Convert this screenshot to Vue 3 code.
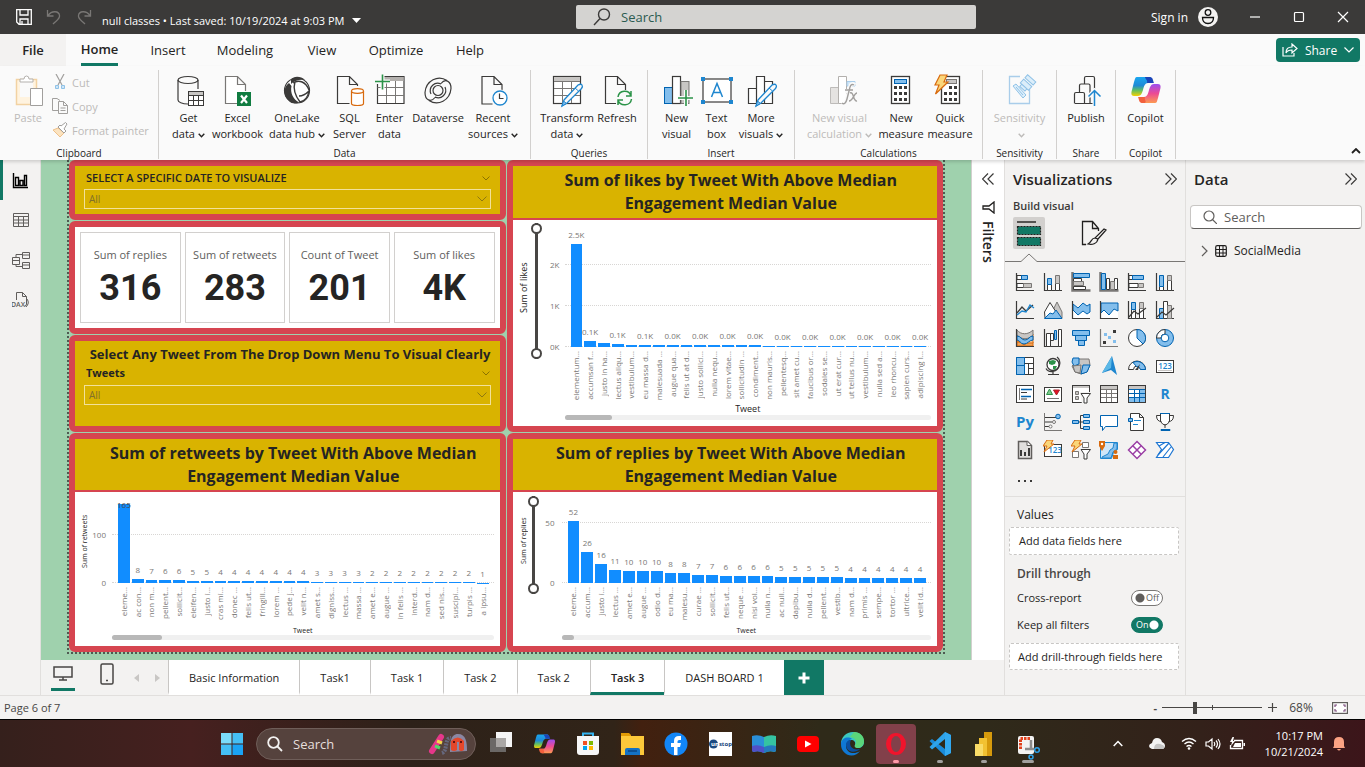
<script setup>
import { ref } from 'vue'

const menus = ['Insert', 'Modeling', 'View', 'Optimize', 'Help']

const ribbon = [
  {
    name: 'Data', cls: 'g-data', items: [
      { icon: 'getData', a: 'Get', b: 'data', drop: true },
      { icon: 'excel', a: 'Excel', b: 'workbook' },
      { icon: 'oneLake', a: 'OneLake', b: 'data hub', drop: true },
      { icon: 'sql', a: 'SQL', b: 'Server' },
      { icon: 'enter', a: 'Enter', b: 'data' },
      { icon: 'dataverse', a: 'Dataverse' },
      { icon: 'recent', a: 'Recent', b: 'sources', drop: true }
    ]
  },
  {
    name: 'Queries', cls: 'g-queries', items: [
      { icon: 'transform', a: 'Transform', b: 'data', drop: true },
      { icon: 'refresh', a: 'Refresh' }
    ]
  },
  {
    name: 'Insert', cls: 'g-insert', items: [
      { icon: 'newVisual', a: 'New', b: 'visual' },
      { icon: 'textBox', a: 'Text', b: 'box' },
      { icon: 'moreVisuals', a: 'More', b: 'visuals', drop: true }
    ]
  },
  {
    name: 'Calculations', cls: 'g-calc', items: [
      { icon: 'calc', a: 'New visual', b: 'calculation', drop: true, off: true },
      { icon: 'measure', a: 'New', b: 'measure' },
      { icon: 'quick', a: 'Quick', b: 'measure' }
    ]
  },
  { name: 'Sensitivity', cls: 'g-sens', items: [{ icon: 'sensitivity', a: 'Sensitivity', b: '', drop: true, off: true }] },
  { name: 'Share', cls: 'g-share', items: [{ icon: 'publish', a: 'Publish' }] },
  { name: 'Copilot', cls: 'g-copilot', items: [{ icon: 'copilot', a: 'Copilot' }] }
]

const pencil = '<path d="M13 25l14-15q3-1.500 4 0t-.5 3.500L16 28l-5 3z" fill="#fafafa" stroke="#1e86cf" stroke-width="1.300"/><path d="M12.500 26l3 2.500-4.500 2.500z" fill="#83beec" stroke="#1e86cf"/><path d="M24 13l3.500 3" stroke="#1e86cf"/>'
const page = '<path d="M15.500 29H5V1.500h12l8 8V17M17 1.500v8h8" fill="none" stroke="#3b3a39" stroke-width="1.200"/>'
const ribbonArt = {
  getData: '<path d="M5 5v20c0 2 4 4 10 4M25 5v9" fill="none" stroke="#3b3a39" stroke-width="1.200"/><ellipse cx="15" cy="5" rx="10" ry="3.500" fill="none" stroke="#3b3a39" stroke-width="1.200"/><rect x="15.500" y="16.500" width="15" height="14" fill="#fff" stroke="#3b3a39"/><path d="M16 17h14v3H16z" fill="#c8c6c4"/><path d="M15.500 20.500h15M15.500 25.500h15M20.500 20v10M25.500 20v10" stroke="#3b3a39"/>',
  excel: '<path d="M16 28.500H3.500v-27h12l8 8V16M15.500 1.500v8h8" fill="#fff" stroke="#797775" stroke-width="1.200"/><rect x="15" y="17" width="14" height="14" fill="#107c41"/><path d="M19 20.500l6 7.500M25 20.500l-6 7.500" stroke="#fff" stroke-width="2.200"/>',
  oneLake: '<circle cx="16" cy="15.500" r="12.500" fill="#fff" stroke="#3b3a39" stroke-width="1.200"/><path d="M10 4.500C13 .5 20 1 24 5c-6-1-11 1-14 4z" fill="#3b3a39"/><path d="M8 8c-6 4-6 13 0 18 3 3 7 3 10 1.500C12 24 9 18 10.500 11z" fill="#3b3a39"/><path d="M14 6.500c-2 7 0 14 5 20.500 4-1 8-5 9-11-3 3-6 5-10 5M12 8c6-4 13-1 16 7" fill="none" stroke="#3b3a39" stroke-width="1.400"/>',
  sql: '<path d="M15.500 28.500H3.500v-27h12l8 8V11M15.500 1.500v8h8" fill="none" stroke="#3b3a39" stroke-width="1.200"/><path d="M17.500 16v12.500c0 1 2.500 2 6 2s6-1 6-2V16" fill="#fff" stroke="#d86a0e" stroke-width="1.200"/><ellipse cx="23.500" cy="16" rx="6" ry="2.300" fill="#fff" stroke="#d86a0e" stroke-width="1.200"/>',
  enter: '<path d="M10 1.500h20v27H3.500V9" fill="#fff" stroke="#3b3a39" stroke-width="1.200"/><path d="M10 2h19.500v4H10z" fill="#b3b0ad"/><path d="M3.500 12.500H30M3.500 20.500H30M12.500 6v22M21.500 6v22" stroke="#797775"/><path d="M8.500-.500v15M1 6.500h15" stroke="#fafafa" stroke-width="4"/><path d="M8.500-.500v15M1 6.500h15" stroke="#2b9348" stroke-width="1.600"/>',
  dataverse: '<g fill="none" stroke="#3b3a39" stroke-width="1.200"><circle cx="16" cy="15.500" r="5"/><path d="M25 5.500c-9-6-21 0-22 12 0 8 6 10 10 5M7 25.500c9 6 21 0 22-12 0-8-6-10-10-5M9 19c-3-7 4-13 10-10M23 12c3 7-4 13-10 10"/></g>',
  recent: page + '<circle cx="23" cy="23" r="8.500" fill="#fafafa"/><circle cx="23" cy="23" r="7" fill="#fff" stroke="#1e86cf" stroke-width="1.300"/><path d="M22.500 18.500V23.500h4" fill="none" stroke="#3b3a39" stroke-width="1.200"/>',
  transform: '<rect x="2.500" y="1.500" width="27" height="27" fill="#fff" stroke="#3b3a39" stroke-width="1.200"/><path d="M3 2h26v4H3z" fill="#c8c6c4"/><path d="M3 6.500h26M3 13.500h26M3 20.500h26M11.500 6v22M20.500 6v22" stroke="#797775"/>' + pencil,
  refresh: '<path d="M15 28.500H4.500v-27h12l8 8V15M16.500 1.500v8h8" fill="none" stroke="#3b3a39" stroke-width="1.200"/><path d="M17 22c1-7 11-8 13-1M30 16v5h-5M30.500 24c-1 7-11 8-13.500 1M17 30v-5h5" fill="none" stroke="#2b9348" stroke-width="1.500"/>',
  newVisual: '<rect x="3.500" y="12.500" width="8" height="16" fill="#83beec" stroke="#0063b1"/><rect x="11.500" y="1.500" width="8" height="27" fill="#fff" stroke="#3b3a39" stroke-width="1.200"/><rect x="20" y="6.500" width="8" height="22" fill="#c8c6c4" stroke="#797775"/><path d="M25 15v16M17 23h15" stroke="#fafafa" stroke-width="4"/><path d="M25 15v16M17 23h15" stroke="#2b9348" stroke-width="1.600"/>',
  textBox: '<rect x="2" y="4" width="28" height="23" fill="#fff" stroke="#3b3a39" stroke-width="1.200"/><g fill="#1e86cf"><path d="M0 2h4v4H0zM28 2h4v4h-4zM0 25h4v4H0zM28 25h4v4h-4z"/></g><path d="M10.500 22L16 8.500 21.500 22M12.500 17.500h7" fill="none" stroke="#1e86cf" stroke-width="1.500"/>',
  moreVisuals: '<path d="M3.500 13.500h8v15h-8zM11.500 1.500h8v27h-8zM19.500 6.500h8v22h-8z" fill="#fff" stroke="#3b3a39" stroke-width="1.200"/>' + pencil,
  calc: '<path d="M6.500 12.500h8v16h-8z" fill="#e5e3e1" stroke="#bdbbb9"/><path d="M14.500 1.500h8v27h-8z" fill="#fff" stroke="#b3b0ad"/><path d="M23 6.500h8V11h-8z" fill="#cfe6f8" stroke="#a9cdea"/><path d="M31 10c-4-3-5 1-6 6l-2 8c-1 4-3 6-5 4M21 16h8" fill="none" stroke="#fafafa" stroke-width="4"/><path d="M30 10c-3-2-4 1-5 6l-2 8c-1 4-3 6-5 4M21 15h8M26 18c4-2 3 9 7 8M33 18c-3 0-4 8-8 8" fill="none" stroke="#a19f9d" stroke-width="1.400"/>',
  measure: '<rect x="6.500" y="1.500" width="18" height="27" fill="#fff" stroke="#3b3a39" stroke-width="1.300"/><rect x="9.500" y="4.500" width="12" height="4" fill="#83beec" stroke="#0063b1"/><path d="M9 11h3v3H9zM14 11h3v3h-3zM19 11h3v3h-3zM9 17h3v3H9zM14 17h3v3h-3zM19 17h3v3h-3zM9 23h3v3H9zM14 23h3v3h-3zM19 23h3v3h-3z" fill="#3b3a39"/>',
  quick: '<rect x="7.500" y="1.500" width="18" height="27" fill="#fff" stroke="#3b3a39" stroke-width="1.300"/><rect x="12.500" y="4.500" width="10" height="4" fill="#c8c6c4" stroke="#797775"/><path d="M10 17h3v3h-3zM15 11h3v3h-3zM20 11h3v3h-3zM15 17h3v3h-3zM20 17h3v3h-3zM10 23h3v3h-3zM15 23h3v3h-3zM20 23h3v3h-3z" fill="#3b3a39"/><path d="M6 0h7l-3 7h4L1.500 19 5 10H1z" fill="#fad67a" stroke="#d86a0e" stroke-width="1.200"/>',
  sensitivity: '<path d="M16 1.500H5.500v27h20V14" fill="none" stroke="#a9cdea" stroke-width="1.300"/><g transform="rotate(42 22 9)" fill="#dceefa" stroke="#90c2e7"><rect x="17" y="1" width="11" height="4"/><path d="M17 7h11v5H17zM19 12h7v3h-7z"/></g><path d="M9 11l3-2 10 11-3 3zM12 12l7 8" fill="#dceefa" stroke="#90c2e7"/>',
  publish: '<path d="M5 28.500h19M4.500 28.500V19q0-1.500 1.500-1.500h7q1.500 0 1.500 1.500v9.500M9.500 17v-6.500Q9.500 9 11 9h7.500q1.500 0 1.500 1.500v18M14.500 8.500V3q0-1.500 1.500-1.500h7q1.500 0 1.500 1.500v11" fill="none" stroke="#3b3a39" stroke-width="1.200"/><path d="M24.500 31V15.500M18.500 21.500l6-6 6 6" fill="none" stroke="#fafafa" stroke-width="4"/><path d="M24.500 31V15.500M18.500 21.500l6-6 6 6" fill="none" stroke="#1e86cf" stroke-width="1.500"/>'
}
const copilotArt = '<path d="M7 2h12c3 0 3 3 4 6h-5c-3 0-4 3-5 7-1 3-2 6-5 6H4c-3 0-3-3-2-6l2-8c1-3 1-5 3-5z" fill="url(#cpA)"/><path d="M17 2h3c3 0 3 4 4 6h-7c1-3-2-4-2-6z" fill="#1b44b8"/><path d="M25 28H13c-3 0-3-3-4-6h5c3 0 4-3 5-7 1-3 2-6 5-6h4c3 0 3 3 2 6l-2 8c-1 3-1 5-3 5z" fill="url(#cpB)"/><path d="M15 28h-3c-3 0-3-4-4-6h7c-1 3 2 4 0 6z" fill="#f2603d"/>'
ribbonArt.copilot = copilotArt

const ax = '<path d="M1.500 1v17.500H19" fill="none" stroke="#3b3a39" stroke-width="1.200"/>'
const B = 'fill="#83beec" stroke="#0063b1"'
const G = 'fill="#c8c6c4" stroke="#797775"'
const W = 'fill="#fff" stroke="#3b3a39"'
const bolt = '<path d="M4 0h6L8 4h3L1 12l3-6H0z" fill="#fad67a" stroke="#d86a0e"/>'
const funnel = '<path d="M10 9.500h9.500L16 14v5h-3v-5z" fill="#fff" stroke="#3b3a39"/>'
const visuals = [
  ['Stacked bar chart', ax + `<path d="M2 3.500h5v4H2zM2 11.500h7v4H2z" ${W}/><path d="M6.500 3.500h6v4h-6z" ${B}/><path d="M8.500 11.500h8v4h-8z" ${G}/>`],
  ['Stacked column chart', ax + `<path d="M4.500 12.500h4v6h-4zM12.500 11.500h4v7h-4z" ${W}/><path d="M4.500 6.500h4v6h-4z" ${B}/><path d="M12.500 3.500h4v8h-4z" ${G}/>`],
  ['Clustered bar chart', `<path d="M1.500 0v18.500H19.500" fill="none" stroke="#797775" stroke-width="2.500"/><path d="M2.500 1.500h16v4h-16z" ${B}/><path d="M2.500 6.500h8v3h-8zM2.500 14.500h12v3h-12z" ${W}/><path d="M2.500 9.500h10v4h-10z" ${G}/>`],
  ['Clustered column chart', `<path d="M1.500 0v18.500H19.500" fill="none" stroke="#797775" stroke-width="2.500"/><path d="M2.500 1.500h4v16h-4z" ${B}/><path d="M7.500 6.500h3v11h-3zM15.500 6.500h3v11h-3z" ${W}/><path d="M11.500 9.500h4v8h-4z" ${G}/>`],
  ['100% stacked bar chart', ax + `<path d="M2 3.500h4v4H2zM2 11.500h9v4H2z" ${W}/><path d="M5.500 3.500h11v4h-11z" ${B}/><path d="M11.500 11.500h5v4h-5z" ${G}/>`],
  ['100% stacked column chart', ax + `<path d="M4.500 14.500h4v4h-4zM12.500 8.500h4v10h-4z" ${W}/><path d="M4.500 3.500h4v11h-4z" ${B}/><path d="M12.500 3.500h4v5h-4z" ${G}/>`],
  ['Line chart', ax + '<path d="M2 13l5-6 4 4 7-6" fill="none" stroke="#3b3a39" stroke-width="1.300"/><path d="M2 15l5-4 4 1 4-7 4 3" fill="none" stroke="#1e86cf" stroke-width="1.300"/>'],
  ['Area chart', `<path d="M8 14l6-12 5 10v6H8z" ${G}/><path d="M1.500 12L7 2.500 13 12l-5 6H2z" ${W}/><path d="M1.500 18.500L7 13l3 1 3-4 6 8.500z" ${B}/>`],
  ['Stacked area chart', `<path d="M2 9l4 3 4-4 4 3 5-4v11H2z" fill="#fff"/><path d="M2 4l5 4 5-5 4 3 3-2v8l-3 2-4-3-5 4-5-5z" ${B}/>` + ax],
  ['100% stacked area chart', `<path d="M2 3h17v15H2z" fill="#fff"/><path d="M2 3h17v8l-4-2-5 6-5-5-3 3z" ${B}/>` + ax],
  ['Line and stacked column chart', ax + `<path d="M4.500 9.500h4v9h-4zM12.500 8.500h4v10h-4z" ${W}/><path d="M4.500 2.500h4v7h-4z" ${B}/><path d="M12.500 2.500h4v6h-4z" ${G}/><path d="M2 17l5-6 4 3 8-6" fill="none" stroke="#3b3a39" stroke-width="1.200"/>`],
  ['Line and clustered column chart', ax + `<path d="M4.500 8.500h4v10h-4z" ${B}/><path d="M8.500 1.500h4v17h-4z" ${W}/><path d="M12.500 5.500h4v13h-4z" ${G}/><path d="M2 17l5-5 4 3 8-7" fill="none" stroke="#3b3a39" stroke-width="1.200"/>`],
  ['Ribbon chart', '<path d="M2 14h4l3-3 4 3h5v4H2z" fill="#f0a35a" stroke="#d86a0e"/><path d="M2 9q3 0 4-3h3q2 5 5 0h4v9h-4q-3 0-5 2-3-3-7-4z" fill="#f7c08a" stroke="#d86a0e"/><path d="M2 2c4 5 11 5 16 0v5c-5 5-11 5-16 0z" fill="#c8c6c4" stroke="#797775"/><path d="M2 8c4 0 4 4 8 4s4-4 8-4v4c-4 0-5 4-9 4s-4-4-7-4z" ' + B + '/>' + ax],
  ['Waterfall chart', ax + `<path d="M3.500 5.500h4v13h-4zM7.500 5.500h3v7h-3zM15.500 1.500h3v17h-3z" ${W}/><path d="M11.500 2.500h2v9h-2z" ${B}/>`],
  ['Funnel chart', `<path d="M1.500 2.500h17v5h-17zM4.500 7.500h11v5h-11zM7.500 12.500h6v5h-6z" ${B}/>`],
  ['Scatter chart', '<path d="M1.500 1v17.500H19" fill="none" stroke="#797775" stroke-width="1.200"/><path d="M5 5h3v3H5zM9 8h3v3H9zM14 12h3v3h-3z" fill="#83beec"/><path d="M14 2h3v3h-3zM4 13h3v3H4z" fill="#3b3a39"/>'],
  ['Pie chart', `<circle cx="10" cy="10" r="8.500" ${W}/><path d="M10 10V1.500a8.500 8.500 0 0 1 6 14.500z" ${B}/>`],
  ['Donut chart', `<circle cx="10" cy="10" r="8.500" ${B}/><path d="M1.500 10A8.500 8.500 0 0 1 10 1.500V6a4 4 0 0 0-4 4z" ${W}/><circle cx="10" cy="10" r="3.800" fill="#fff" stroke="#0063b1"/>`],
  ['Treemap', `<path d="M1.500 1.500h17v17h-17z" ${W}/><path d="M1.500 1.500h8v8h-8zM1.500 9.500h8v9h-8z" ${B}/><path d="M9.500 7.500h9M13.500 7.500v11M13.500 12.500h5" stroke="#3b3a39"/>`],
  ['Map', '<circle cx="10" cy="8.500" r="6" fill="#fff" stroke="#3b3a39" stroke-width="1.300"/><path d="M6 5l4-1 3 1-1 3-3 1-3-1zM10 10l4 0-2 4-2-1z" fill="#2b9348"/><path d="M14 1c5 4 3 13-4 14.500-4 .5-6-1-7-3M10 15.500V18M5 18.500h11" fill="none" stroke="#3b3a39" stroke-width="1.200"/>'],
  ['Filled map', `<path d="M8 3h10l1 6-3 7-6 2-6-2-3-6z" ${G}/><path d="M2 2h6v6l-5 2-2-4z" ${B}/><path d="M12 9h7l-3 7-6 2z" ${B}/><path d="M2 10l8-1-1 8-5-1z" fill="#c8c6c4" stroke="#797775"/>`],
  ['Azure map', '<path d="M13 0l5 19-6-5-9 3z" fill="#1e86cf"/><path d="M13 0L3 17l9-5z" fill="#5cb8e6"/>'],
  ['Gauge', `<path d="M1.500 13.500a8.500 8.500 0 0 1 17 0h-5a3.500 3.500 0 0 0-7 0z" ${W}/><path d="M6 6.500a8.500 8.500 0 0 1 12.500 7h-5a4 4 0 0 0-4-3z" ${B}/><path d="M8 14l5-6-2 6z" fill="#3b3a39"/>`],
  ['Card', `<rect x="1.500" y="4.500" width="17" height="12" ${W}/><text x="10" y="13" text-anchor="middle" font-size="8" font-family="Open Sans" font-weight="600" fill="#1e86cf">123</text><path d="M3 14.500h14" stroke="#c8c6c4"/>`],
  ['Multi-row card', `<rect x="1.500" y="1.500" width="17" height="17" ${W}/><path d="M4.500 4v12" stroke="#797775"/><path d="M6 5.500h11M6 12.500h10" stroke="#0063b1" stroke-width="1.500"/><path d="M6 8.500h6M6 15h6" stroke="#3b3a39"/>`],
  ['KPI', `<rect x="1.500" y="3.500" width="17" height="14" ${W}/><path d="M3.500 10.500L6.500 5l3 5.500z" fill="#7fca8d" stroke="#2b9348"/><path d="M10.500 6h6l-3 5z" fill="#e81123" stroke="#a4262c"/><path d="M4 14.500h12" stroke="#797775"/>`],
  ['Slicer', `<rect x="1.500" y="1.500" width="17" height="17" ${W}/><path d="M2 2h16v2H2z" fill="#c8c6c4"/><path d="M4.500 7.500h3v3h-3zM4.500 12.500h3v3h-3z" ${G}/><path d="M9 8h11v12h-9z" fill="#f3f2f1"/>` + funnel],
  ['Table', `<rect x="1.500" y="1.500" width="17" height="17" ${W}/><path d="M2 2h16v3H2z" fill="#c8c6c4"/><path d="M2 5.500h16M2 9.500h16M2 13.500h16M7.500 5v13M12.500 5v13" stroke="#797775"/>`],
  ['Matrix', `<rect x="1.500" y="1.500" width="17" height="17" ${W}/><path d="M2 2h16v3H2z" fill="#c8c6c4"/><path d="M13 5h5v13h-5zM2 14h16v4H2z" fill="#83beec"/><path d="M2 5.500h16M2 9.500h16M2 13.500h16M7.500 5v13M12.500 5v13" stroke="#0063b1"/><rect x="1.500" y="1.500" width="17" height="17" fill="none" stroke="#3b3a39"/>`],
  ['R script visual', '<text x="10" y="15" text-anchor="middle" font-size="14" font-family="Open Sans" font-weight="700" fill="#1e86cf">R</text>'],
  ['Python visual', '<text x="10" y="15" text-anchor="middle" font-size="15" font-family="Open Sans" font-weight="700" fill="#1e86cf">Py</text>'],
  ['Key influencers', '<path d="M1.500 1v17.500H19" fill="none" stroke="#797775"/><path d="M2 5.500h11M2 10h7M2 14.500h4" stroke="#3b3a39"/><circle cx="15" cy="4.500" r="2.300" ' + B + '/><circle cx="11" cy="10" r="1.500" fill="#fff" stroke="#797775"/><circle cx="7.500" cy="14.500" r="1.500" fill="#fff" stroke="#797775"/>'],
  ['Decomposition tree', `<path d="M7 10h5M9.500 3.500v13h3M9.500 3.500h3" fill="none" stroke="#3b3a39"/><path d="M1.500 8.500h6v3h-6zM12.500 2.500h6v3h-6zM12.500 8.500h6v3h-6zM12.500 14.500h6v3h-6z" ${B}/>`],
  ['Q&A', '<path d="M1.500 3.500h17v11h-12l-3 4v-4h-2z" fill="#fff" stroke="#0063b1"/>'],
  ['Narrative', '<path d="M3.500 1.500h9l4 4v13h-13zM12.500 1.500v4h4" fill="#fff" stroke="#3b3a39"/><path d="M7 8.500h7M6 12.500h5" stroke="#1e86cf"/><path d="M1.500 6.500h4v3h-4z" ' + B + '/>'],
  ['Metrics', `<path d="M5.500 1.500h9v8q-4.500 7-9 0zM5.500 3.500h-4q0 6 5 6M14.500 3.500h4q0 6-5 6M10 12v4" ${W}/><path d="M5 1.500h10M6 17.500h9v1H6z" ${B}/>`],
  ['Paginated report', '<path d="M3.500 1.500h9l4 4v13h-13z" fill="#e1dfdd" stroke="#605e5c" stroke-width="1.500"/><path d="M12 1.500v4h4" fill="#fff" stroke="#605e5c"/><path d="M5 10h2v6H5zM9 12h2v4H9zM13 8h2v8h-2z" fill="#3b3a39"/>'],
  ['Card (new)', `<rect x="1.500" y="4.500" width="17" height="12" ${W}/><text x="12" y="13" text-anchor="middle" font-size="8" font-family="Open Sans" font-weight="600" fill="#1e86cf">123</text>` + bolt],
  ['Slicer (new)', '<path d="M1.500 11.500h6v6h-6zM11.500 2.500h6v5h-6z" fill="#fff" stroke="#797775"/>' + funnel + bolt],
  ['ArcGIS map', '<path d="M1.500 2.500h17v7l-4 3-2 6h-11z" fill="#cfe6f8" stroke="#1e86cf"/><path d="M3 17l6-3 2-4 3-2 1-5h3v6l-4 3-2 6H3z" fill="#83beec" stroke="#1e86cf"/><path d="M0 1h6v5l-3 5-3-5z" fill="#d86a0e"/><circle cx="3" cy="4" r="1.200" fill="#fff"/><circle cx="16.500" cy="12" r="2" fill="#d86a0e"/><path d="M14 15h5v4h-5z" fill="#d86a0e"/>'],
  ['Power Apps', '<path d="M10 1.500L18.500 10 10 18.500 1.500 10z" fill="#fff" stroke="#9b3fa5" stroke-width="1.500"/><path d="M5.800 5.800l8.400 8.400M14.200 5.800l-8.400 8.400" stroke="#9b3fa5" stroke-width="1.500"/>'],
  ['Power Automate', '<path d="M1.500 2.500h12l5 7-5 8h-12l5-8z" fill="#fff" stroke="#1e76d2" stroke-width="1.200"/><path d="M4 6l6-3.500M3 15l11-12M8 17l8-10" fill="none" stroke="#1e76d2" stroke-width="1.200"/>']
]

const kpis = [
  ['Sum of replies', '316'],
  ['Sum of retweets', '283'],
  ['Count of Tweet', '201'],
  ['Sum of likes', '4K']
]

const zip = (names, vals, texts) => names.split('|').map((n, i) => ({ n, v: vals[i], t: texts[i] }))

const likesVals = [2500, 140, 95, 75, 60, 56, 52, 50, 48, 46, 44, 42, 40, 38, 36, 34, 33, 32, 31, 30, 29, 28, 27, 26, 25, 25]
const likes = {
  title: 'Sum of likes by Tweet With Above Median Engagement Median Value',
  axis: 'Sum of likes', cls: 'likes', slider: true, max: 2890,
  ticks: [[0, '0K'], [1000, '1K'], [2000, '2K']],
  bars: zip(
    'elementum…|accumsan f…|justo in ha…|lectus aliqu…|vestibulum…|eu massa d…|malesuada …|augue qua…|felis ut at d…|justo sollici…|nulla nequ…|lorem vitae…|sollicitudin …|condiment…|non mauris…|pellentesq…|sit amet cu…|faucibus or…|sodales se…|ut erat cur…|ut tellus nu…|vestibulum…|nulla sed a…|leo rhoncu…|sapien curs…|adipiscing l…',
    likesVals,
    likesVals.map((v, i) => (i === 0 ? '2.5K' : i % 2 ? (i < 6 ? '0.1K' : '0.0K') : ''))
  )
}
const rtVals = [165, 8, 7, 6, 6, 5, 5, 4, 4, 4, 4, 4, 4, 4, 3, 3, 3, 3, 2, 2, 2, 2, 2, 2, 2, 2, 1]
const retweets = {
  title: 'Sum of retweets by Tweet With Above Median Engagement Median Value',
  axis: 'Sum of retweets', cls: 'small retweets', slider: false, max: 175,
  ticks: [[0, '0'], [100, '100']],
  bars: zip(
    'eleme…|ac con…|non m…|pellent…|sollicit…|eleifen…|justo i…|cras mi…|donec …|felis ut…|fringill…|lorem …|pede j…|velit n…|amet s…|digniss…|lectus …|massa …|amet e…|augue …|in felis …|interd…|nam d…|sed nis…|suscipi…|turpis …|a ipsu…',
    rtVals, rtVals
  )
}
const rpVals = [52, 26, 16, 11, 10, 10, 10, 8, 8, 7, 7, 6, 6, 6, 6, 5, 5, 5, 5, 5, 4, 4, 4, 4, 4, 4]
const replies = {
  title: 'Sum of replies by Tweet With Above Median Engagement Median Value',
  axis: 'Sum of replies', cls: 'small replies', slider: true, max: 70,
  ticks: [[0, '0'], [50, '50']],
  bars: zip(
    'eleme…|accum…|justo i…|lectus …|amet e…|augue …|odio d…|eu ma…|malesu…|curae …|sollicit…|felis ut…|neque …|nisi vol…|nulla n…|ac null…|dapibu…|nulla d…|pellent…|vestib…|nam d…|primis …|sempe…|tortor …|ultrice…|velit id…',
    rpVals, rpVals
  )
}
const charts = [likes, retweets, replies]
const pct = (v, max) => (v / max) * 100 + '%'

const pages = ['Basic Information', 'Task1', 'Task 1', 'Task 2', 'Task 2', 'Task 3', 'DASH BOARD 1']
const current = ref(5)
const cross = ref(false)
const keep = ref(true)
const zoom = ref(32)

const apps = [
  ['Task view', '<path d="M6 10h16v14H6z" fill="#6b6866"/><path d="M12 4h16v15H12z" fill="#f5f5f5"/><path d="M12 10h10v9H12z" fill="#aaa7a5"/>'],
  ['Copilot', '<g transform="translate(5 5) scale(.72)">' + copilotArt + '</g>'],
  ['Microsoft Store', '<path d="M11 9V5.500h10V9" fill="none" stroke="#35b5f2" stroke-width="2"/><path d="M5 8h22v16q0 3-3 3H8q-3 0-3-3z" fill="#f7f7f7"/><path d="M11 13h4v4h-4z" fill="#f25022"/><path d="M17 13h4v4h-4z" fill="#7fba00"/><path d="M11 18h4v4h-4z" fill="#00a4ef"/><path d="M17 18h4v4h-4z" fill="#ffb900"/>'],
  ['File Explorer', '<path d="M5 5h8l2 2v4H5z" fill="#e19a05"/><path d="M5 8h23v19H5z" fill="#fdc83a"/><path d="M9 27v-5q0-2 2-2h11q2 0 2 2v5z" fill="#1471c4"/><path d="M12 23h9" stroke="#0b4f94" stroke-width="2"/>'],
  ['Facebook', '<circle cx="16" cy="16" r="11.500" fill="#1286f7"/><path d="M14 27v-8h-3v-4h3v-2q0-5 5-5h2v4h-2q-1.500 0-1.500 1.500V15H21l-1 4h-2.500v8z" fill="#fff"/>'],
  ['Unstop', '<path d="M5 4h23v24H5z" fill="#fff"/><circle cx="9.500" cy="16" r="4.500" fill="#1c4980"/><text x="7" y="18" font-size="6" font-family="Open Sans" font-weight="700"><tspan fill="#fff">un</tspan><tspan fill="#1c4980">stop</tspan></text>'],
  ['Reader', '<path d="M4 8q6-2 12 1v16q-6-3-10-1-2 0-2-2z" fill="#2a8fd8"/><path d="M28 8q-6-2-12 1v16q6-3 10-1 2 0 2-2z" fill="#35c3a1"/><path d="M4 18q6-2 12 1v6q-6-3-10-1-2 0-2-2z" fill="#5050c8"/><path d="M28 18q-6-2-12 1v6q6-3 10-1 2 0 2-2z" fill="#2479be"/>'],
  ['YouTube', '<rect x="5" y="8" width="22" height="16" rx="4" fill="#f00"/><path d="M13 12.500l6.500 3.500-6.500 3.500z" fill="#fff"/>'],
  ['Edge', '<path d="M5 16C5 9 10 4 17 4s11 5 11 10c0 4-3 6-6 6-2 0-4-1-3-3 1-3-1-5-4-5-5 0-8 4-10 4z" fill="#3cc8c0"/><path d="M18 4c6 0 10 4 10 9 0 4-3 7-6 7-2 0-4-1-3-3 3-4-1-8-5-8z" fill="#5bd67a"/><path d="M5 15c1-5 7-7 11-4-4 1-6 4-6 8 1 6 8 8 14 4-3 5-12 7-17 0-2-3-2-5-2-8z" fill="#0f78d4"/><path d="M10 17c0-3 2-5 5-5-3 6 2 11 9 9-5 5-14 3-14-4z" fill="#0a4fa0"/>'],
  ['Opera', '<ellipse cx="16" cy="16" rx="10" ry="11" fill="#f0142c"/><ellipse cx="16" cy="16" rx="5" ry="8" fill="#82404a"/>'],
  ['Visual Studio Code', '<path d="M21 4l6 3v18l-6 3L5.500 13 8 11l13 10z" fill="#1a8ad8"/><path d="M21 4v7L8 21.500 5.500 19z" fill="#2ea3ea"/><path d="M21 4l6 3v18l-6 3z" fill="#32a9f0"/>'],
  ['Power BI', '<path d="M16 4h8v24h-8z" fill="#d69a0c"/><path d="M11 10h8v18h-8z" fill="#f2c232"/><path d="M7 16h8v12H7z" fill="#f9dc68"/>'],
  ['Snipping Tool', '<rect x="6" y="8" width="16" height="18" rx="2" fill="#f3f3f3"/><path d="M8.500 21V10.500H19" fill="none" stroke="#e0401c" stroke-width="3" stroke-dasharray="2.500 1"/><path d="M19 12v10M13 21h9" stroke="#8c8c8c" stroke-width="2.500"/><circle cx="25" cy="22" r="2.300" fill="none" stroke="#2ea3ea" stroke-width="1.500"/><circle cx="19" cy="29" r="2" fill="none" stroke="#2ea3ea" stroke-width="1.500"/>']
]
const rail = [
  ['Report view', '<path d="M1.500 2v14.500H16" fill="none" stroke="#000" stroke-width="1.400"/><path d="M3.500 6.500h3v8h-3zM8 9.500h3v5H8zM12.500 4.500h2v10h-2z" fill="none" stroke="#000" stroke-width="1.400"/>'],
  ['Table view', '<path d="M1.500 2.500h15v13h-15zM1.500 5.500h15M1.500 9h15M1.500 12h15M6.500 5v10M11.500 5v10" fill="none" stroke="#605e5c"/>'],
  ['Model view', '<path d="M.500 6.500h7v7h-7zM.500 9.500h7M10.500 1.500h7v6h-7zM10.500 4h7M10.500 11.500h7v6h-7zM10.500 14h7M4 6V3.500h6M4 13.500v2h6" fill="none" stroke="#605e5c"/>'],
  ['DAX query view', '<path d="M4.500 9V1.500h6l4 4V13q0 2-2 2M10.500 1.500v4h4M15 8q3 4-1 8" fill="none" stroke="#605e5c"/><path d="M0 9h12v8H0z" fill="#f3f2f1"/><text x="6" y="16" text-anchor="middle" font-size="7" font-family="Open Sans" font-weight="600" fill="#605e5c">DAX</text>']
]
</script>

<template>
  <div class="app">
    <svg class="defs" aria-hidden="true">
      <linearGradient id="cpA" x1="0" y1="0" x2="0" y2="1"><stop offset="0" stop-color="#1aa7f0" /><stop offset=".45" stop-color="#1f8ad6" /><stop offset=".7" stop-color="#5fbf62" /><stop offset="1" stop-color="#f5d000" /></linearGradient>
      <linearGradient id="cpB" x1="0" y1="0" x2="0" y2="1"><stop offset="0" stop-color="#9b4df0" /><stop offset=".5" stop-color="#ec4a94" /><stop offset="1" stop-color="#fd9a52" /></linearGradient>
    </svg>

    <header class="titlebar">
      <div class="tl">
        <button aria-label="Save"><svg width="16" height="16" viewBox="0 0 16 16"><path d="M.7.7h14.600v14.600H3L.7 13zM4 1v5h8V1M4 15v-5h8v5M6 12v3" fill="none" stroke="#fff" stroke-width="1.300" /></svg></button>
        <button aria-label="Undo"><svg width="16" height="16" viewBox="0 0 16 16"><path d="M1.500 1v6h6M2 6.500C6 1 13 2 13.500 6.500 14 10 11 11 7 15" fill="none" stroke="#797775" stroke-width="1.300" /></svg></button>
        <button aria-label="Redo"><svg width="16" height="16" viewBox="0 0 16 16"><path d="M14.500 1v6h-6M14 6.500C10 1 3 2 2.500 6.500 2 10 5 11 9 15" fill="none" stroke="#797775" stroke-width="1.300" /></svg></button>
        <button class="doc">null classes • Last saved: 10/19/2024 at 9:03 PM <svg width="9" height="5" viewBox="0 0 9 5"><path d="M0 0h9L4.500 5z" fill="#fff" /></svg></button>
      </div>
      <label class="tsearch">
        <svg width="18" height="18" viewBox="0 0 18 18"><circle cx="11" cy="6.500" r="5.500" fill="none" stroke="#3b3a39" stroke-width="1.400" /><path d="M7 10.500L1 17" stroke="#3b3a39" stroke-width="1.400" /></svg>
        <input type="text" placeholder="Search" aria-label="Search">
      </label>
      <div class="tr">
        <button class="sign">Sign in
          <svg width="20" height="20" viewBox="0 0 20 20"><circle cx="10" cy="10" r="10" fill="#f3f2f1" /><circle cx="10" cy="5.500" r="2.800" fill="none" stroke="#111" stroke-width="1.300" /><path d="M4.500 10.500h11q0 6-5.500 6t-5.500-6z" fill="none" stroke="#111" stroke-width="1.300" /></svg>
        </button>
        <button class="win" aria-label="Minimize"><svg width="12" height="12" viewBox="0 0 12 12"><path d="M1 6h10" stroke="#fff" stroke-width="1.200" /></svg></button>
        <button class="win" aria-label="Maximize"><svg width="12" height="12" viewBox="0 0 12 12"><rect x="1.500" y="1.500" width="9" height="9" rx="1" fill="none" stroke="#fff" stroke-width="1.200" /></svg></button>
        <button class="win" aria-label="Close"><svg width="12" height="12" viewBox="0 0 12 12"><path d="M1 1l10 10M11 1L1 11" stroke="#fff" stroke-width="1.200" /></svg></button>
      </div>
    </header>

    <nav class="menu">
      <button class="file">File</button>
      <button class="home"><span>Home</span></button>
      <button v-for="m in menus" :key="m">{{ m }}</button>
      <button class="share">
        <svg width="16" height="14" viewBox="0 0 16 14"><path d="M1 4v9h11v-3M4 10c0-4 2-6 6-6V1l5 4.500L10 10V7c-3 0-5 1-6 3z" fill="none" stroke="#fff" stroke-width="1.200" /></svg>
        Share
        <svg width="10" height="6" viewBox="0 0 10 6"><path d="M.500.500L5 5 9.500.500" fill="none" stroke="#fff" stroke-width="1.200" /></svg>
      </button>
    </nav>

    <section class="ribbon">
      <div class="group g-clip">
        <div class="items">
          <button class="rbtn off">
            <svg width="32" height="32" viewBox="0 0 32 32"><path d="M4.500 4.500h20v25h-20z" fill="#fff3df" stroke="#f2d2a2" stroke-width="1.500" /><path d="M8 4h13v18H8z" fill="#fafafa" /><path d="M8 7V4h4q0-3 2.500-3T17 4h4v3z" fill="#fff" stroke="#b3b0ad" /><path d="M18.500 13.500h12v17h-12z" fill="#fff" stroke="#a19f9d" /></svg>
            <span>Paste</span>
          </button>
          <div class="clips">
            <button><svg width="16" height="16" viewBox="0 0 16 16"><path d="M4 0l6 11M12 0L6 11" stroke="#a19f9d" stroke-width="1.200" /><path d="M3.500 11.500h3v3h-3zM9.500 11.500h3v3h-3z" fill="#cfe6f8" stroke="#90c2e7" /></svg>Cut</button>
            <button><svg width="16" height="16" viewBox="0 0 16 16"><path d="M7 12.500H.500V.500H5l3 2" fill="none" stroke="#a19f9d" /><path d="M6.500 3.500h5l4 4v8h-9zM11.500 3.500v4h4M8.500 10h5M8.500 12.500h5" fill="none" stroke="#a19f9d" /></svg>Copy</button>
            <button><svg width="16" height="16" viewBox="0 0 16 16"><path d="M1 8l5-2 6 5-4 4z" fill="#fbe3c0" stroke="#eec08a" /><path d="M6 5l6 6 2-2-2-2 3-5-1.500-1.500L9 4 8 3z" fill="#fff" stroke="#a19f9d" /></svg>Format painter</button>
          </div>
        </div>
        <div class="gname">Clipboard</div>
      </div>
      <div v-for="g in ribbon" :key="g.name" class="group" :class="g.cls">
        <div class="items">
          <button v-for="i in g.items" :key="i.icon" class="rbtn" :class="{ off: i.off }">
            <svg width="32" height="32" viewBox="0 0 32 32" v-html="ribbonArt[i.icon]" />
            <span>{{ i.a }}</span>
            <span>{{ i.b }}<svg v-if="i.drop" class="chev" width="7" height="5" viewBox="0 0 7 5"><path d="M.700.700l2.800 3L6.300.700" fill="none" stroke="currentColor" stroke-width="1.400" /></svg></span>
          </button>
        </div>
        <div class="gname">{{ g.name }}</div>
      </div>
      <button class="collapse" aria-label="Collapse ribbon"><svg width="10" height="6" viewBox="0 0 10 6"><path d="M1 5l4-4 4 4" fill="none" stroke="#201f1e" stroke-width="1.800" /></svg></button>
    </section>

    <main class="main">
      <nav class="rail">
        <button v-for="(r, i) in rail" :key="r[0]" :class="{ on: i === 0 }" :aria-label="r[0]"><svg width="18" height="18" viewBox="0 0 18 18" v-html="r[1]" /></button>
      </nav>

      <div class="center">
        <div class="stage">
          <div class="canvas">
            <div class="report">
              <div class="leftcol">
                <section class="panel slicer">
                  <label class="shead" for="date">SELECT A SPECIFIC DATE TO VISUALIZE
                    <svg width="8" height="5" viewBox="0 0 8 5"><path d="M.500.500L4 4 7.500.500" fill="none" stroke="#8a7200" /></svg>
                  </label>
                  <div class="sel">
                    <select id="date"><option>All</option></select>
                    <svg width="10" height="6" viewBox="0 0 10 6"><path d="M.500.500L5 5 9.500.500" fill="none" stroke="#8f7812" /></svg>
                  </div>
                </section>
                <section class="panel cards">
                  <div v-for="k in kpis" :key="k[0]" class="card"><span>{{ k[0] }}</span><b>{{ k[1] }}</b></div>
                </section>
                <section class="panel slicer tweets">
                  <h3>Select Any Tweet From The Drop Down Menu To Visual Clearly</h3>
                  <label class="shead" for="tweet">Tweets
                    <svg width="8" height="5" viewBox="0 0 8 5"><path d="M.500.500L4 4 7.500.500" fill="none" stroke="#8a7200" /></svg>
                  </label>
                  <div class="sel">
                    <select id="tweet"><option>All</option></select>
                    <svg width="10" height="6" viewBox="0 0 10 6"><path d="M.500.500L5 5 9.500.500" fill="none" stroke="#8f7812" /></svg>
                  </div>
                </section>
              </div>
              <section v-for="c in charts" :key="c.axis" class="panel chart" :class="c.cls">
                <h2>{{ c.title }}</h2>
                <div class="cbody">
                  <div class="ytitle">{{ c.axis }}</div>
                  <div v-if="c.slider" class="vslider"><i /><i /></div>
                  <div class="yticks"><span v-for="t in c.ticks" :key="t[1]" :style="{ bottom: pct(t[0], c.max) }">{{ t[1] }}</span></div>
                  <div class="plot">
                    <hr v-for="t in c.ticks" :key="t[1]" :style="{ bottom: pct(t[0], c.max) }">
                    <div v-for="(b, i) in c.bars" :key="i" class="col">
                      <span :class="{ over: b.v === 165 }">{{ b.t }}</span>
                      <div class="bar" :style="{ height: pct(b.v, c.max) }" />
                    </div>
                  </div>
                  <div class="xlabels"><div v-for="(b, i) in c.bars" :key="i"><span>{{ b.n }}</span></div></div>
                  <div class="xtitle">Tweet</div>
                  <div class="hscroll"><i /></div>
                </div>
              </section>
            </div>
          </div>
          <aside class="filters">
            <svg width="12" height="12" viewBox="0 0 12 12"><path d="M6 .500L.500 6 6 11.500M11.500.500L6 6l5.500 5.500" fill="none" stroke="#3b3a39" stroke-width="1.200" /></svg>
            <svg width="13" height="13" viewBox="0 0 13 13"><path d="M12 1v11L7 8H1V5h6z" fill="none" stroke="#201f1e" stroke-width="1.300" /></svg>
            <span>Filters</span>
          </aside>
        </div>
        <nav class="pages">
          <button class="dev on" aria-label="Desktop layout"><svg width="20" height="16" viewBox="0 0 20 16"><path d="M1 1h18v10H1zM10 11v3M6 14h8" fill="none" stroke="#484644" stroke-width="1.500" /></svg></button>
          <button class="dev phone" aria-label="Mobile layout"><svg width="14" height="22" viewBox="0 0 14 22"><rect x="1" y="1" width="12" height="20" rx="1.500" fill="none" stroke="#484644" stroke-width="1.500" /><path d="M6 17.500h2" stroke="#484644" stroke-width="1.500" /></svg></button>
          <button class="arr" aria-label="Previous page"><svg width="5" height="8" viewBox="0 0 5 8"><path d="M5 0v8L0 4z" fill="#c8c6c4" /></svg></button>
          <button class="arr" aria-label="Next page"><svg width="5" height="8" viewBox="0 0 5 8"><path d="M0 0v8l5-4z" fill="#c8c6c4" /></svg></button>
          <button v-for="(p, i) in pages" :key="i" class="tab" :class="{ on: i === current }" @click="current = i">{{ p }}</button>
          <button class="add" aria-label="New page"><svg width="12" height="12" viewBox="0 0 12 12"><path d="M6 .500v11M.500 6h11" stroke="#fff" stroke-width="3" /></svg></button>
        </nav>
      </div>

      <aside class="viz">
        <div class="phead"><h1>Visualizations</h1><svg width="12" height="12" viewBox="0 0 12 12"><path d="M.500.500L6 6 .500 11.500M6 .500L11.500 6 6 11.500" fill="none" stroke="#3b3a39" stroke-width="1.200" /></svg></div>
        <h4>Build visual</h4>
        <div class="modes">
          <button class="on" aria-label="Build visual"><svg width="26" height="26" viewBox="0 0 26 26"><path d="M1 2h19" stroke="#201f1e" stroke-width="1.400" /><path d="M1.500 6.500h23v8h-23zM1.500 17.500h23v8h-23z" fill="#117865" stroke="#201f1e" stroke-width="1.200" stroke-dasharray="2 1" /></svg></button>
          <button aria-label="Format visual"><svg width="26" height="26" viewBox="0 0 26 26"><path d="M5 24.500H1.500v-23h10l6 7V11M11.500 1.500v7h6" fill="none" stroke="#201f1e" stroke-width="1.300" /><path d="M25 10l-8 9-3-1 9-9zM14 18c-4 0-3 4-7 6 4 1 9 0 10-5z" fill="#f3f2f1" stroke="#201f1e" stroke-width="1.200" /></svg></button>
        </div>
        <svg class="notch" viewBox="0 0 180 9" height="9" preserveAspectRatio="xMinYMin slice"><path d="M0 8.500h16l8-7.500 8 7.500h600" fill="none" stroke="#797775" /></svg>
        <div class="vgrid">
          <button v-for="v in visuals" :key="v[0]" :aria-label="v[0]"><svg width="20" height="20" viewBox="0 0 20 20" v-html="v[1]" /></button>
        </div>
        <button class="more" aria-label="More visuals"><svg width="16" height="4" viewBox="0 0 16 4"><path d="M1 1h2v2H1zM7 1h2v2H7zM13 1h2v2h-2z" fill="#3b3a39" /></svg></button>
        <div class="wells">
          <h5>Values</h5>
          <div class="well">Add data fields here</div>
          <h5 class="drill">Drill through</h5>
          <label class="tog">Cross-report <span class="sw"><input v-model="cross" type="checkbox"><em>{{ cross ? 'On' : 'Off' }}</em></span></label>
          <label class="tog">Keep all filters <span class="sw"><input v-model="keep" type="checkbox"><em>{{ keep ? 'On' : 'Off' }}</em></span></label>
          <div class="well second">Add drill-through fields here</div>
        </div>
      </aside>

      <aside class="data">
        <div class="phead"><h1>Data</h1><svg width="12" height="12" viewBox="0 0 12 12"><path d="M.500.500L6 6 .500 11.500M6 .500L11.500 6 6 11.500" fill="none" stroke="#3b3a39" stroke-width="1.200" /></svg></div>
        <label class="dsearch">
          <svg width="14" height="14" viewBox="0 0 14 14"><circle cx="6" cy="6" r="5" fill="none" stroke="#605e5c" stroke-width="1.200" /><path d="M9.500 9.500L14 14" stroke="#605e5c" stroke-width="1.200" /></svg>
          <input type="text" placeholder="Search" aria-label="Search fields">
        </label>
        <button class="tbl">
          <svg width="7" height="12" viewBox="0 0 7 12"><path d="M1 1l5 5-5 5" fill="none" stroke="#605e5c" stroke-width="1.200" /></svg>
          <svg width="12" height="12" viewBox="0 0 12 12"><rect x=".700" y=".700" width="10.600" height="10.600" rx="1.500" fill="none" stroke="#201f1e" stroke-width="1.200" /><path d="M1 4.500h10M1 8h10M4.500 1v10M8 1v10" stroke="#201f1e" /></svg>
          SocialMedia
        </button>
      </aside>
    </main>

    <footer class="status">
      <span>Page 6 of 7</span>
      <div class="zoom">
        <b>-</b>
        <input v-model="zoom" type="range" min="0" max="100" aria-label="Zoom">
        <svg width="9" height="9" viewBox="0 0 9 9"><path d="M4.500 0v9M0 4.500h9" stroke="#484644" stroke-width="1.200" /></svg>
        <span class="pc">68%</span>
        <button aria-label="Fit to page"><svg width="16" height="12" viewBox="0 0 16 12"><rect x=".600" y=".600" width="14.800" height="10.800" fill="#fff" stroke="#605e5c" stroke-width="1.200" /><path d="M5 3H3v2M11 3h2v2M5 9H3V7M11 9h2V7" fill="none" stroke="#7a4a7a" stroke-width="1.200" /></svg></button>
      </div>
    </footer>

    <footer class="taskbar">
      <div class="pad" />
      <button class="start" aria-label="Start"><svg width="24" height="24" viewBox="0 0 24 24"><path d="M1 1h10.500v10.500H1z" fill="#7bdcfb" /><path d="M12.500 1H23v10.500H12.500zM1 12.500h10.500V23H1z" fill="#45bff5" /><path d="M12.500 12.500H23V23H12.500z" fill="#1aa3f5" /></svg></button>
      <label class="wsearch">
        <svg width="16" height="16" viewBox="0 0 16 16"><circle cx="6.500" cy="6.500" r="5.300" fill="none" stroke="#f3f2f1" stroke-width="1.800" /><path d="M10.500 10.500L15 15" stroke="#f3f2f1" stroke-width="1.800" /></svg>
        <input type="text" placeholder="Search" aria-label="Search Windows">
        <svg width="40" height="22" viewBox="0 0 40 22"><path d="M4 18L13 4" stroke="#e6378a" stroke-width="6" stroke-linecap="round" /><path d="M7 13l5 2" stroke="#53d86b" stroke-width="3" /><path d="M9 8l5 2" stroke="#f6d44b" stroke-width="3" /><path d="M14 20c6-2 2-15 9-15" fill="none" stroke="#66687e" stroke-width="4" stroke-dasharray="2 1" /><path d="M22 19c0-8 0-18 8-18s9 8 9 17z" fill="#8b87a3" /><path d="M23 17V8q7-7 13 0v9q-3 2-5 0V9h-2v8q-3 2-6 0z" fill="#e4472b" /><path d="M26 8v2M33 8v2" stroke="#611" stroke-width="2" /></svg>
      </label>
      <button v-for="a in apps" :key="a[0]" class="tapp" :class="[a[0].split(' ')[0].toLowerCase()]" :aria-label="a[0]"><svg width="32" height="32" viewBox="0 0 32 32" v-html="a[1]" /></button>
      <div class="tray">
        <svg width="10" height="7" viewBox="0 0 10 7"><path d="M.700 6L5 1.500 9.300 6" fill="none" stroke="#fff" stroke-width="1.500" /></svg>
        <svg width="16" height="11" viewBox="0 0 16 11"><path d="M3 11q-3-1-3-3t3-3q1-5 5-5 4 0 5 4 3 1 3 4 0 2-2 3z" fill="#f3f3f3" /><path d="M5 11q0-6 6-5 5 1 4 4l-1 1z" fill="#c5c5c5" /></svg>
        <svg width="16" height="13" viewBox="0 0 16 13"><path d="M1 4.500q7-6 14 0M3.500 7q4.500-4 9 0M5.500 9.500q2.500-2 5 0" fill="none" stroke="#fff" stroke-width="1.400" /><circle cx="8" cy="11.500" r="1.300" fill="#fff" /></svg>
        <svg width="16" height="14" viewBox="0 0 16 14"><path d="M1 5h2.500L7 2v10L3.500 9H1zM9 5q1.500 2 0 4M11 3.500q3 3.500 0 7M13 2q4 5 0 10" fill="none" stroke="#fff" stroke-width="1.200" /></svg>
        <svg width="16" height="14" viewBox="0 0 16 14"><path d="M5 3.500h8.500v8h-12V8" fill="none" stroke="#fff" stroke-width="1.300" /><path d="M6 6h6v4H4z" fill="#fff" /><path d="M14.500 6h1.500v3h-1.500z" fill="#fff" /><path d="M3.500 0L1 5h2L2 9l4-5H4l1-4z" fill="#fff" /></svg>
        <div class="clock"><span>10:17 PM</span><span>10/21/2024</span></div>
        <svg width="12" height="16" viewBox="0 0 12 16"><path d="M0 12l1-2V6q0-5 5-5t5 5v4l1 2zM4 13h4q-2 3-4 0z" fill="#fba283" /></svg>
      </div>
    </footer>
  </div>
</template>

<style>
body { margin: 0; background: #f3f2f1; }
</style>

<style scoped>
* { box-sizing: border-box; }
.app { min-height: 100vh; display: flex; flex-direction: column; font-family: "Open Sans", "Noto Sans", sans-serif; font-size: 11px; color: #252423; }
.defs { position: absolute; width: 0; height: 0; }
button { font: inherit; color: inherit; border: 0; background: none; padding: 0; margin: 0; white-space: nowrap; }
svg { display: block; flex: none; }
input { font: inherit; color: inherit; border: 0; background: none; outline: 0; padding: 0; margin: 0; min-width: 0; }
h1, h2, h3, h4, h5 { margin: 0; font-weight: 600; }

.titlebar { height: 34px; background: #3b3a39; color: #fff; display: grid; grid-template-columns: 576fr 400fr 389fr; align-items: center; }
.tl { display: flex; align-items: center; padding-left: 16px; gap: 14px; }
.tl .doc { display: flex; align-items: center; gap: 8px; margin-left: -4px; padding-top: 6px; }
.tsearch { height: 24px; background: #d4d3d1; border-radius: 2px; display: flex; align-items: center; gap: 10px; padding-left: 17px; }
.tsearch input { flex: 1; font-size: 13px; }
.tsearch input::placeholder { color: #2b5b50; opacity: 1; }
.tr { display: flex; justify-content: flex-end; align-items: center; }
.sign { display: flex; align-items: center; gap: 10px; font-size: 12px; margin-right: 15px; }
.win { width: 44px; height: 34px; display: grid; place-items: center; }

.menu { height: 32px; background: #fafafa; display: grid; grid-template-columns: 66px 67px 70px 84px 70px 78px 70px 1fr; align-items: center; font-size: 13px; }
.menu .file { background: #f3f2f1; height: 32px; font-weight: 600; }
.home { font-weight: 600; height: 32px; }
.home span { display: inline-block; border-bottom: 3px solid #117865; line-height: 28px; }
.menu .share { justify-self: end; margin-right: 5px; height: 24px; width: 84px; background: #117865; color: #fff; border-radius: 4px; display: flex; align-items: center; justify-content: center; gap: 7px; font-size: 12px; }

.ribbon { height: 94px; background: #fafafa; display: flex; padding: 4px 0 1px; position: relative; box-shadow: 0 2px 3px rgba(0, 0, 0, .15); z-index: 2; }
.group { border-right: 1px solid #d2d0ce; display: flex; flex-direction: column; justify-content: space-between; flex: none; }
.items { display: grid; padding-top: 5px; justify-content: center; }
.rbtn { display: flex; flex-direction: column; align-items: center; line-height: 16px; }
.rbtn svg { margin-bottom: 3px; overflow: visible; }
.rbtn span { display: flex; align-items: center; height: 16px; }
.rbtn .chev { margin: 2px 0 0 3px; }
.off { color: #bdbbb9; }
.gname { text-align: center; font-size: 10px; line-height: 12px; }
.g-clip { width: 159px; }
.g-clip .items { grid-template-columns: 40px 100px; justify-content: start; padding-left: 8px; }
.clips { display: flex; flex-direction: column; color: #bdbbb9; padding-left: 4px; margin-top: -5px; }
.clips button { height: 24px; display: flex; align-items: center; gap: 4px; }
.g-data { width: 372px; }
.g-data .items { grid-template-columns: 45px 53px 66px 39px 41px 56px 54px; justify-content: start; padding-left: 7px; }
.g-queries { width: 117px; }
.g-queries .items { grid-template-columns: 56px 44px; }
.g-insert { width: 147px; }
.g-insert .items { grid-template-columns: 34px 46px 43px; }
.g-calc { width: 188px; }
.g-calc .items { grid-template-columns: 74px 49px 49px; }
.g-sens { width: 74px; }
.g-share { width: 59px; }
.g-copilot { width: 60px; }
.collapse { margin-left: auto; align-self: flex-end; padding: 0 4px 5px 0; }

.main { flex: 1; display: grid; grid-template-columns: 41px minmax(0, 1fr) 181px 180px; background: #f3f2f1; border-bottom: 1px solid #e1dfdd; }
.rail { border-right: 1px solid #e1dfdd; display: flex; flex-direction: column; }
.rail button { height: 40px; display: grid; place-items: center; border-left: 3px solid transparent; padding-right: 2px; }
.rail .on { border-color: #117865; }
.center { display: flex; flex-direction: column; min-width: 0; }
.stage { flex: 1; display: flex; min-height: 0; }
.canvas { flex: 1; min-width: 0; background: #9fd1ad; padding: 0 26px 6px; display: flex; }
.report { flex: 1; min-width: 0; border: 2px dotted #4f5a52; border-top: 0; display: grid; grid-template-columns: minmax(0, 1fr) minmax(0, 1fr); grid-template-rows: 272fr 219fr; gap: 1px; }
.filters { width: 33px; background: #fff; border-left: 1px solid #d2d0ce; display: flex; flex-direction: column; align-items: center; padding-top: 13px; gap: 16px; }
.filters span { writing-mode: vertical-rl; font-size: 14px; font-weight: 600; line-height: 18px; margin-top: -9px; }

.panel { border: 6px solid #d64550; border-radius: 6px; min-width: 0; }
.leftcol { display: flex; flex-direction: column; gap: 1px; min-width: 0; }
.slicer { background: #d9b300; height: 60px; padding: 5px 9px 0; }
.shead { display: flex; justify-content: space-between; align-items: center; line-height: 14px; font-size: 11px; font-weight: 600; padding: 0 1px 0 2px; }
.sel { position: relative; margin-top: 4px; }
.sel select { display: block; width: 100%; height: 20px; appearance: none; background: transparent; border: 1px solid #f2e19a; border-radius: 0; color: #80702a; font: inherit; font-size: 10px; padding: 0 4px; }
.sel svg { position: absolute; right: 4px; top: 7px; }
.cards { flex: 1; background: #fff; padding: 5px; display: grid; grid-template-columns: repeat(4, 1fr); gap: 4px; }
.card { border: 1px solid #d2d0ce; display: flex; flex-direction: column; align-items: center; justify-content: center; padding-top: 5px; white-space: nowrap; }
.card span { color: #605e5c; line-height: 16px; }
.card b { font: 700 36px/50px Roboto, "Liberation Sans", sans-serif; }
.tweets { height: 97px; padding-top: 3px; }
.tweets h3 { font-size: 13px; font-weight: 700; line-height: 20px; text-align: right; white-space: nowrap; }
.tweets .shead { font-weight: 700; line-height: 18px; }
.tweets .sel { margin-top: 3px; }

.chart { background: #fff; display: flex; flex-direction: column; }
.chart h2 { background: #d9b300; border-bottom: 2px solid #d64550; font-size: 16px; font-weight: 700; line-height: 23px; padding: 3px 12px 3px 24px; text-align: center; height: 54px; }
.cbody { flex: 1; display: grid; grid-template-columns: 17px 13px 17px 5px minmax(0, 1fr); grid-template-rows: minmax(0, 1fr) 55px 13px 6px; padding: 8px 6px 5px 0; font-size: 8px; color: #797775; }
.ytitle { grid-column: 1; grid-row: 1; writing-mode: vertical-rl; transform: rotate(180deg); text-align: center; color: #252423; font-size: 9px; line-height: 12px; justify-self: end; }
.vslider { grid-column: 2; grid-row: 1; justify-self: center; width: 11px; margin: -5px 0 -12px; display: flex; flex-direction: column; justify-content: space-between; background: linear-gradient(#484644, #484644) center / 3px 100% no-repeat; }
.vslider i { width: 11px; height: 11px; border: 2px solid #484644; border-radius: 50%; background: #fff; }
.yticks { grid-column: 3; grid-row: 1; position: relative; }
.yticks span { position: absolute; right: 0; line-height: 10px; margin-bottom: -5px; }
.plot { grid-column: 5; grid-row: 1; position: relative; display: flex; padding: 0 4px 0 5px; }
.plot hr { position: absolute; left: 0; right: 0; margin: 0; border: 0; border-top: 1px dotted #d8d6d4; }
.col { flex: 1; min-width: 0; display: flex; flex-direction: column; justify-content: flex-end; align-items: center; position: relative; }
.col span { line-height: 10px; margin-bottom: 4px; white-space: nowrap; }
.col .over { margin-bottom: -6px; z-index: 1; color: #484644; }
.bar { align-self: stretch; margin: 0 1px; background: #118dff; flex: none; }
.xlabels { grid-column: 5; grid-row: 2; display: flex; padding: 4px 4px 0 5px; }
.xlabels div { flex: 1; min-width: 0; display: flex; justify-content: center; align-items: flex-start; }
.xlabels span { writing-mode: vertical-rl; transform: rotate(180deg); white-space: nowrap; line-height: 12px; }
.xtitle { grid-column: 5; grid-row: 3; text-align: center; color: #252423; font-size: 9px; line-height: 14px; }
.hscroll { grid-column: 5; grid-row: 4; height: 5px; border-radius: 3px; background: #f0f0f0; }
.hscroll i { display: block; height: 5px; width: 47px; border-radius: 3px; background: #b8b8b8; }
.small h2 { height: 53px; }
.small .cbody { grid-template-rows: minmax(0, 1fr) 43px 9px 6px; padding-top: 7px; }
.small .ytitle { font-size: 7px; }
.small .xtitle { font-size: 7px; line-height: 9px; }
.small .vslider { margin: -3px 0 -11px; }
.retweets .cbody { grid-template-columns: 16px 0 15px 6px minmax(0, 1fr); }
.retweets .hscroll i { width: 50px; }
.replies .cbody { grid-template-columns: 17px 8px 17px 7px minmax(0, 1fr); }
.replies .hscroll i { width: 12px; }
.likes { grid-column: 2; grid-row: 1; }

.pages { height: 35px; display: flex; }
.dev { width: 24px; margin: 0 10px; display: grid; place-items: center; padding-bottom: 4px; border-bottom: 3px solid transparent; }
.dev.on { border-color: #117865; margin-bottom: 4px; padding-bottom: 0; }
.phone { margin: 0 7px 0 10px; }
.arr { width: 21px; display: grid; place-items: center; }
.tab { background: #fff; border-left: 1px solid #c8c6c4; padding: 3px 20px 0; border-bottom: 3px solid #fff; }
.tab.on { font-weight: 600; border-bottom-color: #117865; }
.add { width: 40px; background: #117865; display: grid; place-items: center; }

.viz, .data { border-left: 1px solid #e1dfdd; min-width: 0; }
.phead { display: flex; justify-content: space-between; align-items: center; height: 38px; padding: 0 8px; }
.phead h1 { font-size: 15px; }
.viz h4 { padding-left: 8px; line-height: 16px; font-size: 11px; color: #3b3a39; }
.modes { display: flex; gap: 33px; padding: 3px 8px 4px; }
.modes button { width: 32px; height: 32px; display: grid; place-items: center; border-radius: 2px; }
.modes .on { background: #d2d0ce; }
.notch { width: 100%; }
.vgrid { display: grid; grid-template-columns: repeat(6, 28px); grid-auto-rows: 28px; padding: 6px 6px 0; }
.vgrid button { display: grid; place-items: center; }
.more { height: 32px; padding: 2px 12px 0; display: block; }
.wells { border-top: 1px solid #e1dfdd; padding: 9px 6px 0 4px; font-size: 12px; }
.wells h5 { padding-left: 8px; font-size: 12px; line-height: 18px; font-weight: 400; }
.wells .drill { font-weight: 600; color: #484644; padding-top: 9px; line-height: 20px; }
.well { height: 28px; border: 1px dashed #c8c6c4; background: #fff; margin-top: 3px; line-height: 26px; padding-left: 9px; border-radius: 2px; white-space: nowrap; font-size: 11px; }
.second { height: 27px; margin-top: 5px; line-height: 25px; padding-left: 8px; }
.tog { display: flex; justify-content: space-between; align-items: center; height: 27px; padding: 0 16px 0 8px; font-size: 11px; }
.sw { position: relative; display: block; width: 32px; height: 16px; }
.sw input { appearance: none; display: block; width: 32px; height: 16px; border-radius: 8px; border: 1px solid #797775; background: radial-gradient(circle at 8px 7px, #605e5c 4px, #fff 5px); }
.sw input:checked { border-color: #117865; background: radial-gradient(circle at 22px 7px, #fff 4px, #117865 5px); }
.sw em { position: absolute; top: 0; right: 4px; line-height: 16px; font-style: normal; font-size: 9px; color: #605e5c; pointer-events: none; }
.sw input:checked + em { right: auto; left: 5px; color: #fff; }

.dsearch { margin: 7px 3px 0 4px; height: 24px; background: #fff; border: 1px solid #c8c6c4; border-bottom-color: #605e5c; border-radius: 4px; display: flex; align-items: center; gap: 7px; padding-left: 12px; }
.dsearch input { flex: 1; font-size: 13px; }
.dsearch input::placeholder { color: #605e5c; opacity: 1; }
.tbl { display: flex; align-items: center; gap: 7px; padding: 13px 0 0 15px; font-size: 12px; }

.status { height: 24px; background: #f3f2f1; display: flex; align-items: center; justify-content: space-between; padding: 0 17px 0 4px; color: #484644; border-bottom: 1px solid #000; }
.zoom { display: flex; align-items: center; }
.zoom b { margin-right: 5px; }
.zoom input { appearance: none; width: 100px; height: 12px; margin-right: 6px; background: linear-gradient(#484644, #484644) center / 100% 1px no-repeat, linear-gradient(#484644, #484644) 50px center / 1px 5px no-repeat; }
.zoom input::-webkit-slider-thumb { appearance: none; width: 4px; height: 12px; background: #484644; }
.pc { width: 46px; text-align: center; margin: 0 8px 0 1px; font-size: 12px; }

.taskbar { height: 47px; display: flex; align-items: center; color: #fff; background: linear-gradient(90deg, #35201c, #46201f 14%, #2d2119 30%, #312418 45%, #42200f 47%, #2f2a19 60%, #2f2a1a 72%, #33211a 88%, #3c151a); }
.pad { flex: 0 1 210px; }
.start { width: 44px; display: grid; place-items: center; }
.wsearch { width: 220px; height: 32px; margin: 0 2px; border-radius: 16px; background: #55423d; border: 1px solid #6f5e59; display: flex; align-items: center; gap: 10px; padding: 0 7px 0 10px; }
.wsearch input { flex: 1; font-size: 13px; }
.wsearch input::placeholder { color: #e6dfdc; opacity: 1; }
.tapp { width: 40px; height: 40px; margin: 0 2px; border-radius: 4px; display: grid; place-items: center; position: relative; }
.opera { background: #82404a; }
.opera::after, .visual::after, .power::after, .snipping::after { content: ""; position: absolute; bottom: 1px; left: 17px; width: 6px; height: 3px; border-radius: 2px; background: #a19f9d; }
.opera::after { background: #ff9aa8; }
.snipping::after { width: 12px; left: 14px; }
.tray { margin-left: auto; display: flex; align-items: center; padding-right: 20px; gap: 8px; }
.tray svg:nth-child(1) { margin-right: 18px; }
.tray svg:nth-child(2) { margin-right: 8px; }
.clock { display: flex; flex-direction: column; text-align: right; line-height: 16px; margin: 0 2px 0 12px; }
</style>
